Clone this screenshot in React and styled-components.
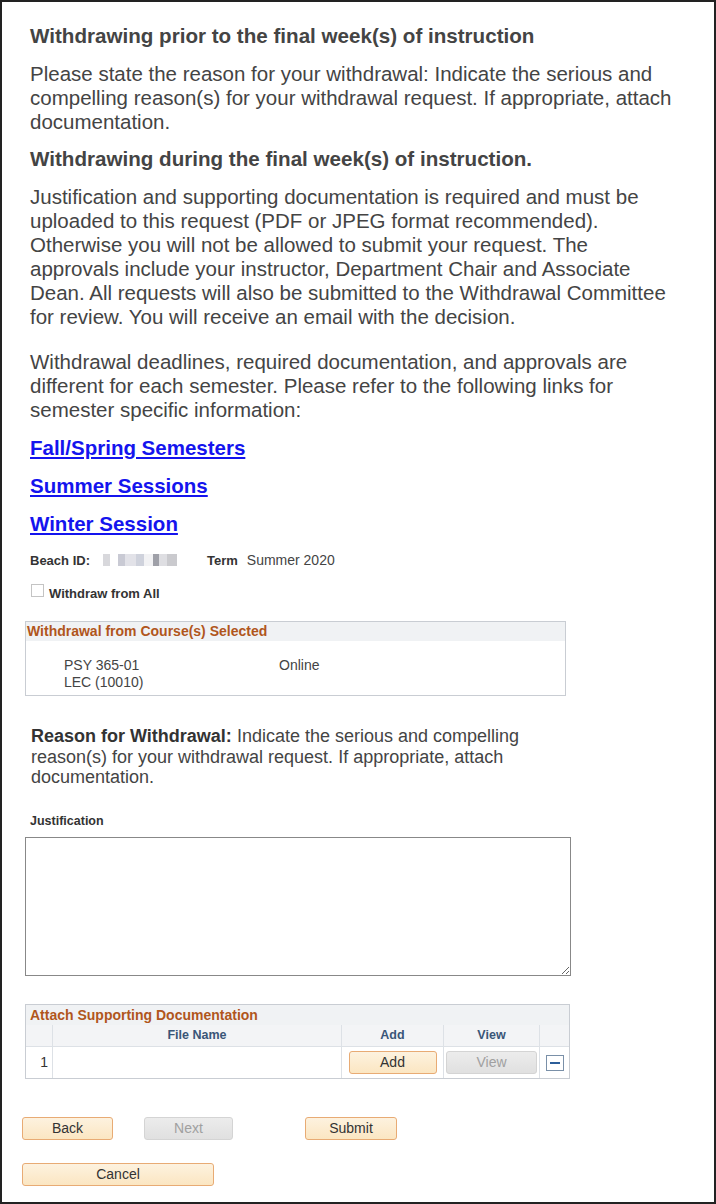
import React from 'react';
import styled, {createGlobalStyle} from 'styled-components';

const Global = createGlobalStyle`
    html, body {
        margin: 0;
        padding: 0;
        background: #ffffff;
    }
    body {
        font-family: "Liberation Sans", Arial, sans-serif;
        color: #444444;
    }
`;

// 페이지 전체 틀
const Page = styled.div`
    width: 716px;
    height: 1204px;
    box-sizing: border-box;
    border: 2px solid #222;
    padding: 22px 0 0 28px;
    overflow: hidden;
`;

const Heading = styled.div`
    font-size: 20.6px;
    font-weight: bold;
    line-height: 24px;
    color: #444;
    margin-bottom: 14px;
`;

const Para = styled.div`
    font-size: 20.5px;
    line-height: 24px;
    color: #444;
    width: 646px;
    margin-bottom: ${p => p.gap || 14}px;
`;

const LinkItem = styled.a`
    display: block;
    font-size: 20.5px;
    font-weight: bold;
    line-height: 24px;
    color: #1414ee;
    text-decoration: underline;
    margin-bottom: 14px;
    cursor: pointer;
`;

const InfoRow = styled.div`
    display: flex;
    align-items: center;
    height: 20px;
    margin-top: 4px;
    font-size: 13px;
`;

const Label = styled.span`
    font-weight: bold;
    color: #333;
    margin-right: ${p => p.gap || 8}px;
`;

const Value = styled.span`
    font-size: 14px;
    color: #444;
`;

const Blur = styled.span`
    display: inline-block;
    width: 74px;
    height: 12px;
    margin: 0 30px 0 5px;
    background: linear-gradient(90deg, #d8d8dc 0 10%, #fff 10% 20%, #c9cad4 20% 30%, #e2e2e8 30% 45%, #cfd2dc 45% 55%, #f2f2f4 55% 68%, #9fa0a8 68% 76%, #dedee2 76% 86%, #cacace 86% 100%);
`;

const CheckRow = styled.label`
    display: flex;
    align-items: center;
    margin: 16px 0 0 1px;
    font-size: 13px;
    font-weight: bold;
    color: #333;
`;

const Box = styled.span`
    width: 13px;
    height: 13px;
    box-sizing: border-box;
    border: 1px solid #c4c4c4;
    margin-right: 5px;
    margin-top: -6px;
`;

const Panel = styled.div`
    width: ${p => p.w}px;
    box-sizing: border-box;
    border: 1px solid #c9cdd3;
    margin-left: -5px;
    margin-top: ${p => p.top}px;
`;

const PanelTitle = styled.div`
    background: #f0f2f4;
    font-size: 14px;
    font-weight: bold;
    color: #b0561c;
    height: ${p => p.h || 19}px;
    line-height: ${p => p.h || 19}px;
    padding-left: ${p => p.pad || 1}px;
`;

const CourseBody = styled.div`
    display: grid;
    grid-template-columns: 215px 1fr;
    padding: 16px 0 4px 38px;
    font-size: 14px;
    line-height: 17px;
    color: #444;
`;

const Reason = styled.p`
    margin: 30px 0 0 1px;
    width: 520px;
    font-size: 18px;
    line-height: 20.5px;
    color: #444;
`;

const ReasonLead = styled.strong`
    color: #333;
`;

const FieldLabel = styled.div`
    margin-top: 26px;
    font-size: 12.5px;
    font-weight: bold;
    color: #333;
`;

const TextArea = styled.textarea`
    display: block;
    width: 546px;
    height: 139px;
    box-sizing: border-box;
    margin: 9px 0 0 -5px;
    border: 1px solid #888;
    resize: both;
    font-family: inherit;
`;

const Grid = styled.table`
    width: 100%;
    border-collapse: collapse;
    font-size: 12.5px;

    th {
        background: #f3f4f6;
        color: #3a5678;
        font-weight: bold;
        height: 21px;
        border: 1px solid #dde1e6;
        border-top: none;
        padding: 0;
    }

    td {
        height: 31px;
        border: 1px solid #dde1e6;
        border-bottom: none;
        padding: 0;
        font-size: 14px;
        color: #333;
    }

    tr > *:first-child { border-left: none; }
    tr > *:last-child { border-right: none; }
`;

const Btn = styled.button`
    width: ${p => p.w}px;
    height: 23px;
    box-sizing: border-box;
    border-radius: 3px;
    font-family: "Liberation Sans", Arial, sans-serif;
    font-size: 14px;
    padding: 0;
    border: 1px solid ${p => p.off ? '#d4d4d4' : '#e8ab74'};
    color: ${p => p.off ? '#a0a0a0' : '#333'};
    background: ${p => p.off
        ? 'linear-gradient(#ececec, #e0e0e0)'
        : 'linear-gradient(#fdf2df, #fbe6c2)'};
    margin-left: ${p => p.left || 0}px;
`;

const MinusIcon = styled.span`
    display: inline-flex;
    align-items: center;
    justify-content: center;
    width: 18px;
    height: 16px;
    box-sizing: border-box;
    border: 1px solid #7a90a8;
    background: #fff;
    vertical-align: middle;

    &::after {
        content: '';
        width: 10px;
        height: 2px;
        background: #2c5e99;
    }
`;

const ButtonRow = styled.div`
    display: flex;
    margin: ${p => p.top}px 0 0 -8px;
`;

function App() {
    return (
        <>
            <Global />
            <Page>
                <Heading>Withdrawing prior to the final week(s) of instruction</Heading>
                <Para gap={13}>
                    Please state the reason for your withdrawal: Indicate the serious and compelling reason(s) for your withdrawal request. If appropriate, attach documentation.
                </Para>
                <Heading>Withdrawing during the final week(s) of instruction.</Heading>
                <Para gap={21}>
                    Justification and supporting documentation is required and must be uploaded to this request (PDF or JPEG format recommended). Otherwise you will not be allowed to submit your request. The approvals include your instructor, Department Chair and Associate Dean. All requests will also be submitted to the Withdrawal Committee for review. You will receive an email with the decision.
                </Para>
                <Para>
                    Withdrawal deadlines, required documentation, and approvals are different for each semester. Please refer to the following links for semester specific information:
                </Para>

                <LinkItem>Fall/Spring Semesters</LinkItem>
                <LinkItem>Summer Sessions</LinkItem>
                <LinkItem>Winter Session</LinkItem>

                <InfoRow>
                    <Label gap={8}>Beach ID:</Label>
                    <Blur />
                    <Label gap={9}>Term</Label>
                    <Value>Summer 2020</Value>
                </InfoRow>

                <CheckRow>
                    <Box />
                    Withdraw from All
                </CheckRow>

                <Panel w={541} top={20}>
                    <PanelTitle>Withdrawal from Course(s) Selected</PanelTitle>
                    <CourseBody>
                        <div>PSY 365-01<br />LEC (10010)</div>
                        <div>Online</div>
                    </CourseBody>
                </Panel>

                <Reason>
                    <ReasonLead>Reason for Withdrawal:</ReasonLead>{' '}Indicate the serious and compelling reason(s) for your withdrawal request. If appropriate, attach documentation.
                </Reason>

                <FieldLabel>Justification</FieldLabel>
                <TextArea />

                <Panel w={545} top={28}>
                    <PanelTitle pad={4} h={20}>Attach Supporting Documentation</PanelTitle>
                    <Grid>
                        <thead>
                            <tr>
                                <th style={{width: 26}}></th>
                                <th>File Name</th>
                                <th style={{width: 101}}>Add</th>
                                <th style={{width: 95}}>View</th>
                                <th style={{width: 29}}></th>
                            </tr>
                        </thead>
                        <tbody>
                            <tr>
                                <td style={{textAlign: 'right', paddingRight: 4}}>1</td>
                                <td></td>
                                <td style={{textAlign: 'center'}}><Btn w={88}>Add</Btn></td>
                                <td style={{textAlign: 'center'}}><Btn w={91} off>View</Btn></td>
                                <td style={{textAlign: 'center'}}><MinusIcon /></td>
                            </tr>
                        </tbody>
                    </Grid>
                </Panel>

                <ButtonRow top={38}>
                    <Btn w={91}>Back</Btn>
                    <Btn w={89} off left={31}>Next</Btn>
                    <Btn w={92} left={72}>Submit</Btn>
                </ButtonRow>
                <ButtonRow top={23}>
                    <Btn w={192}>Cancel</Btn>
                </ButtonRow>
            </Page>
        </>
    );
}

export default App;
